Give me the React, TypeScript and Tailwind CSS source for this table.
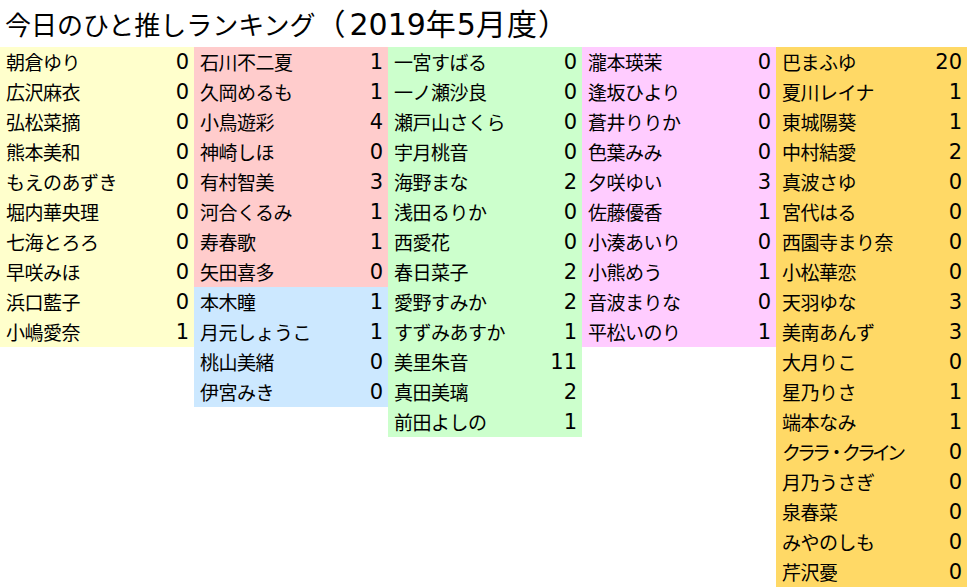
import React from "react";

type Row = [string, number];
type Group = { color: string; rows: Row[] };

const columns: Group[][] = [
  [
    {
      color: "bg-[#ffffcc]",
      rows: [
        ["朝倉ゆり", 0],
        ["広沢麻衣", 0],
        ["弘松菜摘", 0],
        ["熊本美和", 0],
        ["もえのあずき", 0],
        ["堀内華央理", 0],
        ["七海とろろ", 0],
        ["早咲みほ", 0],
        ["浜口藍子", 0],
        ["小嶋愛奈", 1],
      ],
    },
  ],
  [
    {
      color: "bg-[#ffcccc]",
      rows: [
        ["石川不二夏", 1],
        ["久岡めるも", 1],
        ["小鳥遊彩", 4],
        ["神崎しほ", 0],
        ["有村智美", 3],
        ["河合くるみ", 1],
        ["寿春歌", 1],
        ["矢田喜多", 0],
      ],
    },
    {
      color: "bg-[#cce8ff]",
      rows: [
        ["本木瞳", 1],
        ["月元しょうこ", 1],
        ["桃山美緒", 0],
        ["伊宮みき", 0],
      ],
    },
  ],
  [
    {
      color: "bg-[#ccffcc]",
      rows: [
        ["一宮すばる", 0],
        ["一ノ瀬沙良", 0],
        ["瀬戸山さくら", 0],
        ["宇月桃音", 0],
        ["海野まな", 2],
        ["浅田るりか", 0],
        ["西愛花", 0],
        ["春日菜子", 2],
        ["愛野すみか", 2],
        ["すずみあすか", 1],
        ["美里朱音", 11],
        ["真田美璃", 2],
        ["前田よしの", 1],
      ],
    },
  ],
  [
    {
      color: "bg-[#ffccff]",
      rows: [
        ["瀧本瑛茉", 0],
        ["逢坂ひより", 0],
        ["蒼井りりか", 0],
        ["色葉みみ", 0],
        ["夕咲ゆい", 3],
        ["佐藤優香", 1],
        ["小湊あいり", 0],
        ["小熊めう", 1],
        ["音波まりな", 0],
        ["平松いのり", 1],
      ],
    },
  ],
  [
    {
      color: "bg-[#ffd966]",
      rows: [
        ["巴まふゆ", 20],
        ["夏川レイナ", 1],
        ["東城陽葵", 1],
        ["中村結愛", 2],
        ["真波さゆ", 0],
        ["宮代はる", 0],
        ["西園寺まり奈", 0],
        ["小松華恋", 0],
        ["天羽ゆな", 3],
        ["美南あんず", 3],
        ["大月りこ", 0],
        ["星乃りさ", 1],
        ["端本なみ", 1],
        ["クララ・クライン", 0],
        ["月乃うさぎ", 0],
        ["泉春菜", 0],
        ["みやのしも", 0],
        ["芹沢憂", 0],
      ],
    },
  ],
];

const widths = ["w-[194px]", "w-[194px]", "w-[194px]", "w-[194px]", "w-[191px]"];

const digitFont = { fontFamily: '"DejaVu Sans", "Noto Sans", sans-serif' };

export default function App() {
  return (
    <div
      className="w-[967px] h-[587px] overflow-hidden bg-white text-black"
      style={{ fontFamily: '"Noto Sans CJK JP", "Noto Sans", sans-serif' }}
    >
      <div className="flex h-[47px] items-baseline pl-[5px] whitespace-nowrap leading-[44px]">
        <span className="text-[26px]">今日のひと推しランキング</span>
        <span className="text-[30px] leading-[44px]">（</span>
        <span className="ml-[4px] text-[30px]" style={digitFont}>
          2019
        </span>
        <span className="text-[30px] tracking-[1px]">年</span>
        <span className="text-[30px]" style={digitFont}>
          5
        </span>
        <span className="text-[30px] tracking-[1px]">月度）</span>
      </div>
      <div className="flex items-start">
        {columns.map((groups, ci) => (
          <div key={ci} className={`flex flex-col ${widths[ci]}`}>
            {groups.map((g, gi) => (
              <div key={gi} className={g.color}>
                {g.rows.map(([name, n], ri) => (
                  <div
                    key={ri}
                    className="flex h-[30px] items-center justify-between pl-[6px] pr-[5px] text-[19px] leading-[30px]"
                  >
                    <span
                      className={
                        name === "クララ・クライン"
                          ? "tracking-[-4px]"
                          : "tracking-[-0.5px]"
                      }
                    >
                      {name}
                    </span>
                    <span className="text-[21px]" style={digitFont}>
                      {n}
                    </span>
                  </div>
                ))}
              </div>
            ))}
          </div>
        ))}
      </div>
    </div>
  );
}
